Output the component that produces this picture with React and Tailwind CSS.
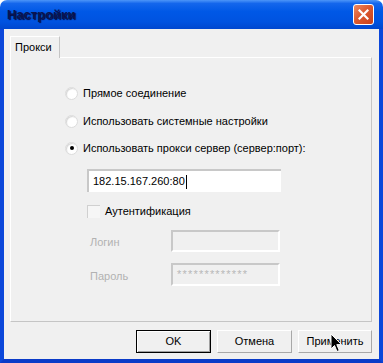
import React from "react";

const Radio = ({ checked, label }) => (
  <div className="flex items-center h-[16px] gap-[5px]">
    <span className="w-[13px] h-[13px] rounded-full bg-white border border-[#dcdcdc] shadow-[inset_1px_1px_1px_#d6d6d6] flex items-center justify-center">
      {checked && <span className="w-[4px] h-[4px] rounded-full bg-black" />}
    </span>
    <span className="text-black">{label}</span>
  </div>
);

const Button = ({ children, primary, w = "w-[75px]" }) => (
  <div
    className={`${w} h-[23px] flex items-center justify-center bg-[#f0f0f0] text-black ${
      primary
        ? "border border-black shadow-[inset_1px_1px_0_#fff,inset_-1px_-1px_0_#a0a0a0]"
        : "border border-t-white border-l-white border-r-[#a8a8a8] border-b-[#a8a8a8]"
    }`}
  >
    {children}
  </div>
);

const App = () => {
  return (
    <div className="relative w-[383px] h-[363px] flex flex-col bg-white font-['Liberation_Sans',Arial,sans-serif] text-[11px] leading-none">
      {/* title bar */}
      <div className="h-[29px] shrink-0 rounded-t-[7px] flex items-center justify-between pl-[7px] pr-[9px] bg-[linear-gradient(to_bottom,#4d95f8_0%,#1466ec_12%,#0058e6_40%,#0053e0_75%,#0047cf_100%)]">
        <span className="text-[13px] font-bold text-[#0a1450] [text-shadow:1px_1px_1px_#000a40]">Настройки</span>
        <div className="w-[21px] h-[21px] rounded-[3px] border border-white bg-[linear-gradient(135deg,#ee8a62,#dc5a30_45%,#c8401c)] flex items-center justify-center">
          <svg width="11" height="11" viewBox="0 0 11 11">
            <path d="M1.5 1.5 L9.5 9.5 M9.5 1.5 L1.5 9.5" stroke="#fff" strokeWidth="2.2" strokeLinecap="square" />
          </svg>
        </div>
      </div>

      {/* body */}
      <div className="flex-1 flex flex-col border-x-4 border-b-4 border-x-[#0b47da] border-b-[#0a3bc8] bg-[#f0f0f0] pl-[6px] pr-[7px] pt-[7px]">
        {/* tab strip */}
        <div className="flex h-[21px] shrink-0">
          <div className="relative z-10 w-[50px] h-[22px] bg-[#f0f0f0] border-t border-l border-white border-r border-r-[#c5c5c5] flex items-start pt-[5px] pl-[4px] text-black">
            Прокси
          </div>
        </div>

        {/* tab page */}
        <div className="h-[265px] shrink-0 border border-t-white border-l-white border-r-[#c5c5c5] border-b-[#c5c5c5] flex flex-col pt-[27px] pl-[54px]">
          <Radio label="Прямое соединение" />
          <div className="mt-[12px]">
            <Radio label="Использовать системные настройки" />
          </div>
          <div className="mt-[11px]">
            <Radio checked label="Использовать прокси сервер (сервер:порт):" />
          </div>

          <div className="mt-[13px] ml-[22px] w-[194px] h-[23px] bg-white border-t-2 border-l-2 border-t-[#c8c8c8] border-l-[#c8c8c8] flex items-center pl-[4px] text-black">
            <span>182.15.167.260:80</span>
            <span className="w-px h-[14px] bg-black ml-px" />
          </div>

          <div className="mt-[13px] ml-[22px] flex items-center h-[13px] gap-[5px]">
            <span className="w-[13px] h-[13px] bg-[#f6f6f6] border-t border-l border-[#d0d0d0]" />
            <span className="text-black">Аутентификация</span>
          </div>

          <div className="mt-[12px] ml-[25px] flex items-center">
            <span className="w-[81px] text-[#b2b2b2] pt-[2px]">Логин</span>
            <div className="w-[109px] h-[22px] bg-[#f0f0f0] border-2 border-t-[#c8c8c8] border-l-[#c8c8c8] border-r-white border-b-white" />
          </div>

          <div className="mt-[11px] ml-[25px] flex items-center">
            <span className="w-[81px] text-[#b2b2b2] pt-[4px]">Пароль</span>
            <div className="w-[109px] h-[23px] bg-[#f0f0f0] border-2 border-t-[#c8c8c8] border-l-[#c8c8c8] border-r-white border-b-white flex items-center pl-[4px] text-[#b8b8b8] tracking-[1.2px]">
              *************
            </div>
          </div>
        </div>

        {/* buttons */}
        <div className="mt-[8px] flex justify-end gap-[6px]">
          <Button primary>OK</Button>
          <Button>Отмена</Button>
          <Button w="w-[74px]">Применить</Button>
        </div>
      </div>

      {/* mouse pointer */}
      <svg className="absolute left-[330px] top-[333px]" width="13" height="21" viewBox="0 0 13 21">
        <path d="M1 1 L1 16 L4.5 12.5 L7 18.5 L9.3 17.5 L6.8 11.6 L11.5 11.6 Z" fill="#000" stroke="#fff" strokeWidth="1" />
      </svg>
    </div>
  );
};

export default App;
